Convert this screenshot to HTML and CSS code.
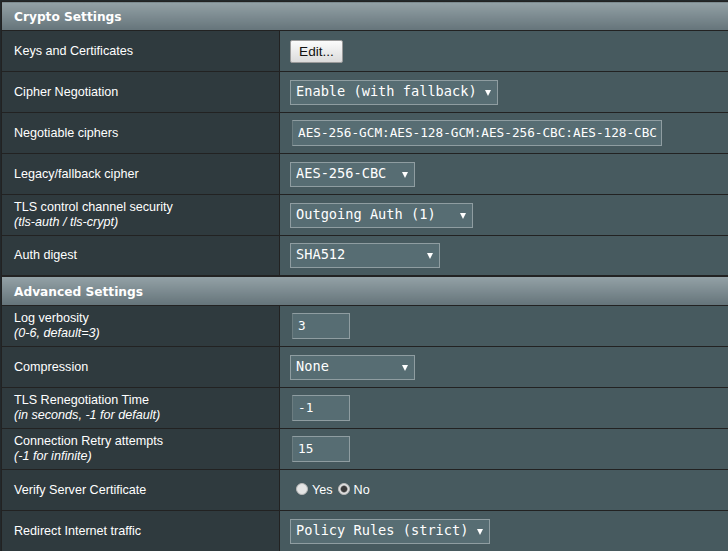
FILE: index.html
```html
<!DOCTYPE html>
<html>
<head>
<meta charset="utf-8">
<title>OpenVPN Client Settings</title>
<link rel="stylesheet" href="styles.css">
</head>
<body>
<div class="page">
  <table class="form-table">
    <colgroup><col class="label-col"><col></colgroup>
    <tbody>
      <tr class="section"><td colspan="2">Crypto Settings</td></tr>
      <tr><th>Keys and Certificates</th><td><button class="btn">Edit...</button></td></tr>
      <tr><th>Cipher Negotiation</th><td><span class="select w-cipher"><select><option>Enable (with fallback)</option></select></span></td></tr>
      <tr><th>Negotiable ciphers</th><td><input class="text w-long" type="text" value="AES-256-GCM:AES-128-GCM:AES-256-CBC:AES-128-CBC"></td></tr>
      <tr><th>Legacy/fallback cipher</th><td><span class="select w-legacy"><select><option>AES-256-CBC</option></select></span></td></tr>
      <tr><th>TLS control channel security<br><i>(tls-auth / tls-crypt)</i></th><td><span class="select w-tls"><select><option>Outgoing Auth (1)</option></select></span></td></tr>
      <tr class="last"><th>Auth digest</th><td><span class="select w-digest"><select><option>SHA512</option></select></span></td></tr>
      <tr class="section section-next"><td colspan="2">Advanced Settings</td></tr>
      <tr><th>Log verbosity<br><i>(0-6, default=3)</i></th><td><input class="text w-short" type="text" value="3"></td></tr>
      <tr><th>Compression</th><td><span class="select w-legacy"><select><option>None</option></select></span></td></tr>
      <tr><th>TLS Renegotiation Time<br><i>(in seconds, -1 for default)</i></th><td><input class="text w-short" type="text" value="-1"></td></tr>
      <tr><th>Connection Retry attempts<br><i>(-1 for infinite)</i></th><td><input class="text w-short" type="text" value="15"></td></tr>
      <tr><th>Verify Server Certificate</th><td><label class="radio"><input type="radio" name="verify">Yes</label><label class="radio"><input type="radio" name="verify" checked>No</label></td></tr>
      <tr><th>Redirect Internet traffic</th><td><span class="select w-policy"><select><option>Policy Rules (strict)</option></select></span></td></tr>
    </tbody>
  </table>
</div>
</body>
</html>
```

FILE: styles.css
```css
html, body {
  margin: 0;
  padding: 0;
  background: #22282b;
  overflow: hidden;
}

.page {
  padding: 1px 0 0 1px;
  width: 760px;
}

.form-table {
  border-collapse: collapse;
  table-layout: fixed;
  width: 750px;
  border: 1px solid #222;
}

.label-col {
  width: 278px;
}

.form-table .section td {
  height: 27px;
  padding: 1px 12px 0;
  border: 1px solid #222;
  background: linear-gradient(to bottom, #93a1a6 0%, #65747a 100%);
  color: #fff;
  font-family: "DejaVu Sans", Verdana, sans-serif;
  font-weight: bold;
  font-size: 12.2px;
  text-align: left;
  vertical-align: middle;
}

.form-table .section-next td {
  border-top: 2px solid #222;
}

.form-table th {
  height: 40px;
  padding: 0 12px;
  border: 1px solid #222;
  background: #2f3a3e;
  color: #fff;
  font-family: "Liberation Sans", Arial, sans-serif;
  font-size: 12.6px;
  font-weight: normal;
  line-height: 15px;
  text-align: left;
  vertical-align: middle;
}

.form-table th i {
  font-style: italic;
}

.form-table td {
  height: 40px;
  padding: 0 10px;
  border: 1px solid #222;
  background: #475a5f;
  vertical-align: middle;
  color: #fff;
  font-family: "Liberation Sans", Arial, sans-serif;
  font-size: 12.6px;
}

.form-table .last th,
.form-table .last td {
  height: 39px;
}

.btn {
  display: block;
  width: 53px;
  height: 23px;
  margin: 0;
  padding: 0;
  border: 1px solid #9a9a9a;
  border-radius: 2px;
  background: linear-gradient(to bottom, #fbfbfb 0%, #dcdcdc 100%);
  color: #111;
  font-family: "Liberation Sans", Arial, sans-serif;
  font-size: 13.6px;
}

.select {
  position: relative;
  display: inline-block;
  vertical-align: middle;
}

.select select {
  display: block;
  appearance: none;
  -webkit-appearance: none;
  width: 100%;
  height: 25px;
  margin: 0;
  padding: 0 0 3px 5px;
  border: 1px solid #8f9da1;
  border-radius: 0;
  background: #576d73;
  color: #fff;
  font-family: "DejaVu Sans Mono", monospace;
  font-size: 13.65px;
  outline: none;
}

.select::after {
  content: "";
  position: absolute;
  right: 7px;
  top: 10px;
  width: 0;
  height: 0;
  border-left: 3px solid transparent;
  border-right: 3px solid transparent;
  border-top: 6px solid #fff;
  pointer-events: none;
}

.w-cipher { width: 208px; }
.w-legacy { width: 125px; }
.w-tls { width: 183px; }
.w-digest { width: 150px; }
.w-policy { width: 200px; }

.text {
  display: block;
  height: 26px;
  margin: 0 0 0 2px;
  padding: 0 0 2px 5px;
  box-sizing: border-box;
  border: 1px solid #8f9da1;
  border-left-color: #6c7d81;
  border-radius: 0;
  background: #576d73;
  color: #fff;
  font-family: "DejaVu Sans Mono", monospace;
  font-size: 12.7px;
  outline: none;
}

.w-long { width: 370px; }
.w-short { width: 58px; }

.radio {
  display: inline-flex;
  align-items: center;
  margin-right: 5px;
  padding-left: 6px;
  color: #fff;
}

.radio + .radio {
  padding-left: 0;
}

.radio input {
  appearance: none;
  -webkit-appearance: none;
  width: 12px;
  height: 12px;
  margin: 0 4px 2px 0;
  border-radius: 50%;
  border: 1px solid #b8b8b8;
  background: #e4e4e4;
}

.radio input:checked {
  background: radial-gradient(circle, #3b3b3b 0 2.6px, #7a7a7a 3.2px, #e4e4e4 4px);
}
```
